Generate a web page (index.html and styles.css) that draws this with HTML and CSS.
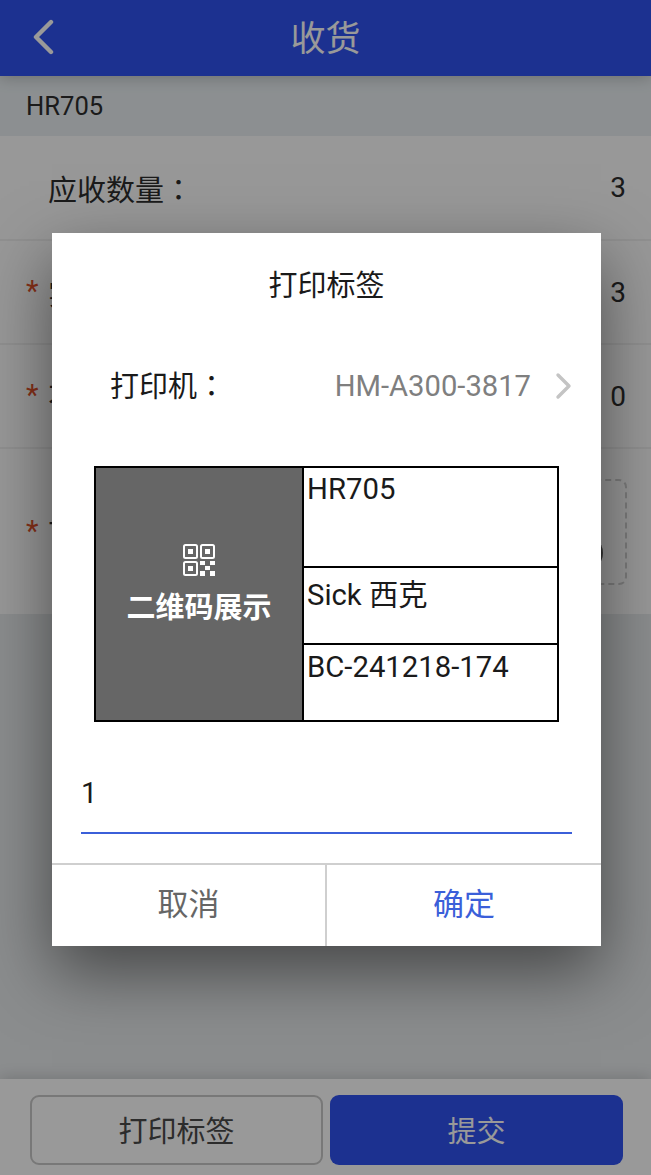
FILE: index.html
```html
<!DOCTYPE html>
<html lang="zh">
<head>
<meta charset="utf-8">
<title>收货</title>
<link rel="stylesheet" href="styles.css">
</head>
<body>
<div class="app">
  <header class="topbar">
    <svg class="back" width="24" height="36" viewBox="0 0 24 36"><path d="M20 3 5 18l15 15" fill="none" stroke="#fff" stroke-width="4.4" stroke-linecap="round" stroke-linejoin="round"/></svg>
    <h1 class="title">收货</h1>
  </header>
  <div class="code">HR705</div>
  <section class="form">
    <div class="row row-first"><span class="label">应收数量<span class="colon" lang="zh-TW">：</span></span><span class="value">3</span></div>
    <div class="row"><span class="req">*</span><span class="label">实收数量<span class="colon" lang="zh-TW">：</span></span><span class="value">3</span></div>
    <div class="row"><span class="req">*</span><span class="label">不良数量<span class="colon" lang="zh-TW">：</span></span><span class="value">0</span></div>
    <div class="row row-tall"><span class="req">*</span><span class="label">下架位<span class="colon" lang="zh-TW">：</span></span><div class="upload"><span class="upload-dot"></span></div></div>
  </section>
  <div class="spacer"></div>
  <footer class="actions">
    <button class="btn btn-outline">打印标签</button>
    <button class="btn btn-solid">提交</button>
  </footer>
</div>

<div class="overlay">
  <div class="dialog">
    <h2 class="dialog-title">打印标签</h2>
    <div class="printer">
      <span class="printer-label">打印机<span class="colon" lang="zh-TW">：</span></span>
      <span class="printer-name">HM-A300-3817</span>
      <svg class="chev" width="18" height="28" viewBox="0 0 18 28"><path d="M3 3l11 11L3 25" fill="none" stroke="#c4c4c4" stroke-width="3.4" stroke-linecap="round" stroke-linejoin="round"/></svg>
    </div>
    <div class="label-card">
      <div class="qr">
        <svg width="34" height="34" viewBox="0 0 34 34" fill="none" stroke="#fff" stroke-width="2">
          <rect x="2" y="2" width="13" height="13" rx="1.5"/>
          <rect x="19" y="2" width="13" height="13" rx="1.5"/>
          <rect x="2" y="19" width="13" height="13" rx="1.5"/>
          <g fill="#fff" stroke="none">
            <rect x="6" y="6" width="5" height="5"/>
            <rect x="23" y="6" width="5" height="5"/>
            <rect x="6" y="23" width="5" height="5"/>
            <rect x="18" y="18" width="5" height="4"/>
            <rect x="28" y="18" width="5" height="4"/>
            <rect x="23" y="23" width="5" height="4"/>
            <rect x="18" y="28" width="5" height="5"/>
            <rect x="28" y="28" width="5" height="5"/>
          </g>
        </svg>
        <span class="qr-text">二维码展示</span>
      </div>
      <div class="info">
        <div class="info-cell info-1">HR705</div>
        <div class="info-cell info-2">Sick 西克</div>
        <div class="info-cell info-3">BC-241218-174</div>
      </div>
    </div>
    <div class="qty">1</div>
    <div class="dialog-actions">
      <span class="dlg-btn dlg-cancel">取消</span>
      <span class="dlg-btn dlg-ok">确定</span>
    </div>
  </div>
</div>
</body>
</html>
```

FILE: styles.css
```css
* { box-sizing: border-box; }
html, body { margin: 0; padding: 0; }
body {
  width: 651px;
  height: 1175px;
  overflow: hidden;
  position: relative;
  font-family: Roboto, "Noto Sans CJK SC", sans-serif;
  color: #2e2e2e;
  background: #e8ebed;
}
.app { height: 1175px; display: flex; flex-direction: column; }
.colon { font-family: "Noto Sans CJK TC", sans-serif; }

.topbar {
  height: 76px;
  background: #3052f0;
  display: flex;
  align-items: center;
  justify-content: center;
  position: relative;
  z-index: 1;
  box-shadow: 0 2px 14px rgba(0, 0, 0, .22);
}
.back { position: absolute; left: 31px; top: 19px; }
.title { margin: 0; font-size: 35px; font-weight: 400; color: #fff; line-height: 76px; padding-top: 3px; }

.code {
  height: 60px;
  background: #e9eff2;
  padding-left: 26px;
  font-size: 25.6px;
  line-height: 60px;
}

.form { background: #fdfdfd; }
.row {
  height: 104px;
  border-bottom: 2px solid #f0f0f0;
  display: flex;
  align-items: center;
  padding: 0 25px 0 48px;
  position: relative;
  font-size: 29px;
}
.row-first { height: 105px; }
.row-tall { height: 165px; border-bottom: 0; }
.req {
  position: absolute;
  left: 26px;
  top: 50%;
  margin-top: -21px;
  color: #e0502a;
  font-size: 29px;
  line-height: 40px;
}
.label { flex: 1; }
.value { font-size: 28px; }
.upload {
  width: 120px;
  height: 106px;
  margin: 1px -1px 0 0;
  border: 2px dashed #cfcfcf;
  border-radius: 8px;
  display: flex;
  align-items: center;
  justify-content: flex-end;
  padding-right: 22px;
}
.upload-dot {
  width: 12px;
  height: 22px;
  margin-top: 42px;
  border-radius: 50%;
  background: #555;
}
.spacer { flex: 1; }

.actions {
  height: 96px;
  background: #fff;
  display: flex;
  gap: 7px;
  padding: 16px 28px 10px 30px;
  position: relative;
  box-shadow: 0 -2px 14px rgba(0, 0, 0, .16);
}
.btn {
  width: 293px;
  font: inherit;
  font-size: 29px;
  border-radius: 9px;
  padding: 0 0 3px;
}
.btn-outline { background: #fff; color: #4a4a4a; border: 2px solid #c8c8c8; }
.btn-solid { background: #3052f0; color: #fff; border: 0; }

.overlay {
  position: absolute;
  inset: 0;
  z-index: 2;
  background: rgba(0, 0, 0, .4);
  padding: 233px 50px 0 52px;
}
.dialog {
  width: 549px;
  height: 713px;
  background: #fff;
  color: #1a1a1a;
  box-shadow: 0 26px 64px rgba(0, 0, 0, .5);
  display: flex;
  flex-direction: column;
}
.dialog-title {
  margin: 0;
  height: 104px;
  padding-top: 29px;
  text-align: center;
  font-size: 29px;
  font-weight: 400;
  line-height: 48px;
}
.printer {
  height: 98px;
  display: flex;
  align-items: center;
  padding: 0 28px 0 59px;
  font-size: 29px;
}
.printer-label { flex: 1; margin: -4px 0 0 -1px; }
.printer-name { color: #7f7f7f; font-size: 29.2px; }
.chev { margin-left: 24px; }

.label-card {
  margin: 31px 42px 0;
  height: 256px;
  border: 2px solid #000;
  display: flex;
}
.qr {
  width: 206px;
  background: #666;
  color: #fff;
  display: flex;
  flex-direction: column;
  align-items: center;
  justify-content: center;
  gap: 9px;
  padding-bottom: 15px;
}
.qr-text { font-size: 29px; font-weight: 700; line-height: 44px; }
.info { flex: 1; display: flex; flex-direction: column; border-left: 2px solid #000; }
.info-cell { padding: 1px 0 0 3px; font-size: 29.3px; line-height: 40px; }
.info-1 { height: 100px; border-bottom: 2px solid #000; }
.info-2 { height: 77px; border-bottom: 2px solid #000; padding-top: 7px; }
.info-3 { flex: 1; padding-top: 2px; }

.qty {
  margin: 41px 29px 0;
  height: 71px;
  border-bottom: 2px solid #3b5fd9;
  font-size: 29px;
  line-height: 60px;
}
.dialog-actions {
  margin-top: auto;
  height: 83px;
  border-top: 2px solid #cfcfcf;
  display: flex;
}
.dlg-btn { text-align: center; font-size: 31px; line-height: 80px; }
.dlg-cancel { width: 275px; color: #666; border-right: 2px solid #cfcfcf; }
.dlg-ok { flex: 1; color: #3b5fd9; }
```
